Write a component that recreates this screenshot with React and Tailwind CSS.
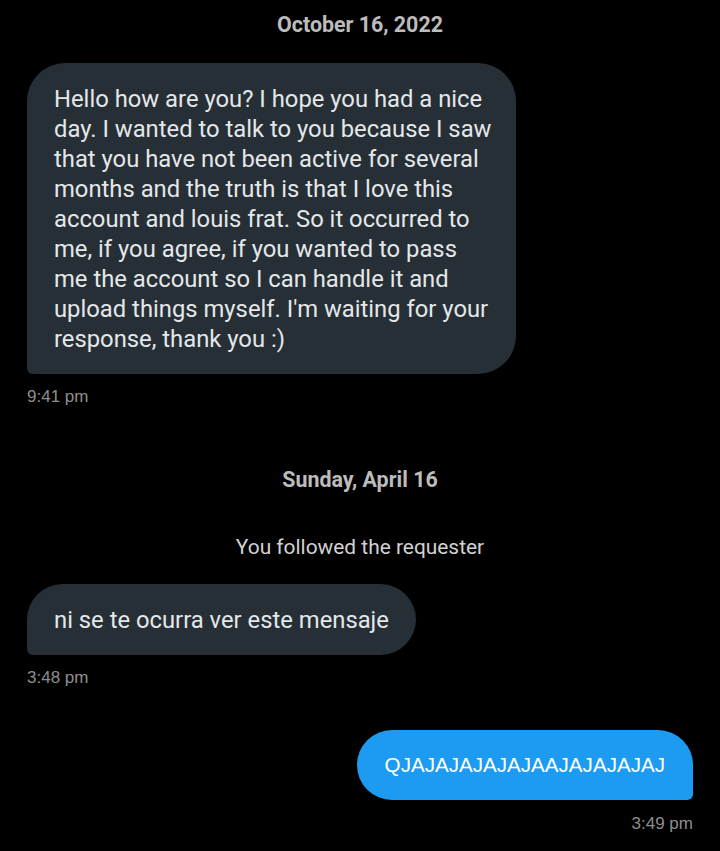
import React from "react";

const roboto = { fontFamily: "Roboto, 'Noto Sans', sans-serif" };

const firstMessage = [
  "Hello how are you? I hope you had a nice",
  "day. I wanted to talk to you because I saw",
  "that you have not been active for several",
  "months and the truth is that I love this",
  "account and louis frat. So it occurred to",
  "me, if you agree, if you wanted to pass",
  "me the account so I can handle it and",
  "upload things myself. I'm waiting for your",
  "response, thank you :)",
];

const DateLabel = ({ children, className = "" }) => (
  <div className={`text-center text-[21.4px] leading-6 font-bold text-[#bcbcbc] ${className}`}>
    {children}
  </div>
);

const Stamp = ({ children, right, className = "" }) => (
  <div
    className={`text-[17px] leading-5 text-[#8e8e8e] font-['Liberation_Sans',Arial,sans-serif] ${right ? "text-right" : ""} ${className}`}
  >
    {children}
  </div>
);

const App = () => {
  return (
    <div className="w-[720px] h-[851px] bg-black overflow-hidden px-[27px] flex flex-col" style={roboto}>
      <DateLabel className="mt-[13px]">October 16, 2022</DateLabel>

      <div className="mt-[26px] w-[489px] bg-[#262f36] rounded-[38px] rounded-bl-[6px] pl-[27px] pr-[20px] pt-[21px] pb-[20px] text-[23.8px] leading-[30px] text-[#e4e7e9]">
        {firstMessage.map((line) => (
          <div key={line} className="whitespace-nowrap">
            {line}
          </div>
        ))}
      </div>
      <Stamp className="mt-[13px]">9:41 pm</Stamp>

      <DateLabel className="mt-[61px]">Sunday, April 16</DateLabel>

      <div className="mt-[43px] text-center text-[20.9px] leading-6 text-[#d2d2d2]">
        You followed the requester
      </div>

      <div className="mt-[25px] self-start bg-[#262f36] rounded-[36px] rounded-bl-[6px] px-[27px] pt-[21px] pb-[20px] text-[23.8px] leading-[30px] text-[#e4e7e9]">
        ni se te ocurra ver este mensaje
      </div>
      <Stamp className="mt-[13px]">3:48 pm</Stamp>

      <div className="mt-[42px] self-end bg-[#1d9bf0] rounded-[36px] rounded-br-[6px] px-[28px] py-[23px] text-[20.6px] leading-6 text-white font-['Liberation_Sans',Arial,sans-serif]">
        QJAJAJAJAJAJAAJAJAJAJAJ
      </div>
      <Stamp right className="mt-[14px]">3:49 pm</Stamp>
    </div>
  );
};

export default App;
